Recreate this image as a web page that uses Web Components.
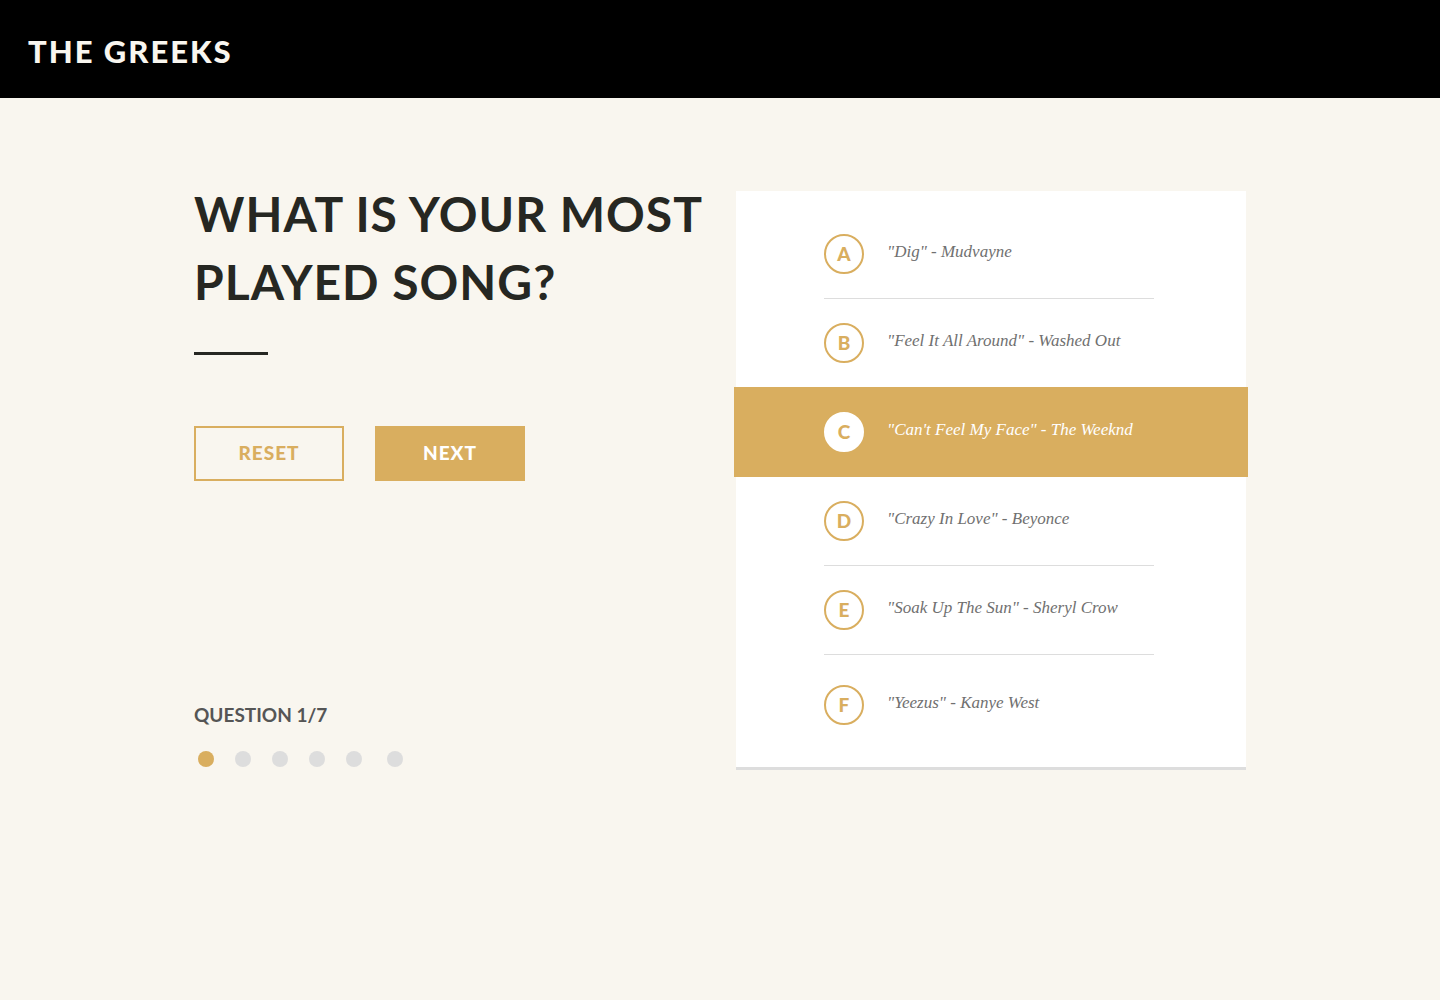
<!DOCTYPE html>
<html lang="en">
<head>
<meta charset="utf-8">
<title>The Greeks</title>
<style>
  :root {
    --gold: #d9ae5f;
    --ink: #262722;
    --paper: #f9f6ef;
    --line: #dddddd;
    --sans: Lato, "Open Sans", sans-serif;
    --serif: "Liberation Serif", serif;
  }
  body { margin: 0; background: var(--paper); color: var(--ink); font-family: var(--sans); }
</style>
</head>
<body>
<site-header>THE GREEKS</site-header>
<quiz-page>
  <quiz-question slot="question">What is your most played song?</quiz-question>
  <quiz-actions slot="actions"></quiz-actions>
  <quiz-progress slot="progress" dots="6" current="1">Question 1/7</quiz-progress>
  <quiz-answers slot="answers"></quiz-answers>
</quiz-page>

<script>
  const define = (name, markup, setup) => {
    const template = document.createElement('template');
    template.innerHTML = markup;
    customElements.define(name, class extends HTMLElement {
      constructor() {
        super();
        this.attachShadow({ mode: 'open' }).append(template.content.cloneNode(true));
      }
      connectedCallback() { if (setup) setup(this, this.shadowRoot); }
    });
  };

  define('site-header', `
    <style>
      :host { display: block; }
      header { display: flex; align-items: center; min-height: 98px; padding: 4px 28px 0; box-sizing: border-box; background: #000; }
      a { color: var(--paper); font-size: 31px; line-height: 40px; font-weight: 900; letter-spacing: 2px; text-decoration: none; }
    </style>
    <header><a href="#"><slot></slot></a></header>`);

  define('quiz-page', `
    <style>
      :host { display: block; }
      main { display: grid; grid-template-columns: minmax(0, 1fr) 510px; max-width: 1052px; margin: 0 auto; padding: 82px 24px; }
      .side { display: flex; flex-direction: column; justify-content: space-between; padding-bottom: 3px; }
      .card { margin-top: 11px; }
      @media (max-width: 1000px) {
        main { grid-template-columns: minmax(0, 1fr); gap: 40px; }
        .side { gap: 40px; }
      }
    </style>
    <main>
      <div class="side">
        <div><slot name="question"></slot><slot name="actions"></slot></div>
        <slot name="progress"></slot>
      </div>
      <div class="card"><slot name="answers"></slot></div>
    </main>`);

  define('quiz-question', `
    <style>
      :host { display: block; }
      h1 { margin: 0; font-size: 48px; line-height: 68px; font-weight: 700; letter-spacing: 1px; text-transform: uppercase; }
      hr { width: 74px; height: 3px; margin: 36px 0 0; border: 0; background: var(--ink); }
    </style>
    <h1><slot></slot></h1><hr>`);

  define('quiz-actions', `
    <style>
      :host { display: flex; flex-wrap: wrap; gap: 31px; margin-top: 71px; }
      button { width: 150px; height: 55px; padding: 0 0 2px; border: 2px solid var(--gold); background: transparent; color: var(--gold);
        font: 900 19px/24px var(--sans); letter-spacing: 1px; cursor: pointer; }
      .primary { background: var(--gold); color: #fff; }
    </style>
    <button type="button">RESET</button>
    <button type="button" class="primary">NEXT</button>`);

  define('quiz-progress', `
    <style>
      :host { display: block; }
      p { margin: 0 0 24px; color: #555; font-size: 19px; line-height: 24px; font-weight: 700; text-transform: uppercase; }
      ol { display: flex; gap: 21px; margin: 0; padding: 0 4px; list-style: none; }
      li { width: 16px; height: 16px; border-radius: 50%; background: var(--line); }
      li:last-child { margin-left: 4px; }
      li[aria-current] { background: var(--gold); }
    </style>
    <p><slot></slot></p><ol></ol>`, (host, root) => {
      const list = root.querySelector('ol');
      list.replaceChildren();
      for (let i = 1; i <= Number(host.getAttribute('dots')); i++) {
        const dot = document.createElement('li');
        if (i === Number(host.getAttribute('current'))) dot.setAttribute('aria-current', 'step');
        list.append(dot);
      }
    });

  const answers = [
    ['A', '"Dig" - Mudvayne'],
    ['B', '"Feel It All Around" - Washed Out'],
    ['C', '"Can\'t Feel My Face" - The Weeknd'],
    ['D', '"Crazy In Love" - Beyonce'],
    ['E', '"Soak Up The Sun" - Sheryl Crow'],
    ['F', '"Yeezus" - Kanye West']
  ];

  define('quiz-answers', `
    <style>
      :host { display: block; }
      fieldset { min-width: 0; margin: 0; padding: 19px 0 13px; border: 0; border-bottom: 3px solid var(--line); background: #fff; }
      .row { padding: 0 92px 0 88px; }
      label { display: grid; grid-template-columns: 40px 1fr; column-gap: 23px; align-items: center; height: 88px;
        border-bottom: 1px solid var(--line); cursor: pointer; }
      input { appearance: none; grid-area: 1 / 1; box-sizing: border-box; width: 40px; height: 40px; margin: 0;
        border: 2px solid var(--gold); border-radius: 50%; cursor: pointer; }
      .key { grid-area: 1 / 1; text-align: center; color: var(--gold); font-size: 19px; line-height: 24px; font-weight: 900; pointer-events: none; }
      .text { padding-bottom: 4px; color: #707070; font: italic 17px/24px var(--serif); }
      .row:has(+ .row input:checked) label { border-color: transparent; }
      .row:has(input:checked) { margin: -1px -2px 0; padding: 1px 94px 0 90px; background: var(--gold); }
      .row:has(input:checked) label { border-color: transparent; }
      .row:has(input:checked) .text { color: #fff; }
      input:checked { border-color: #fff; background: #fff; }
      .row:last-child label { height: 99px; border-bottom: 0; }
      @media (max-width: 560px) {
        .row, .row:has(input:checked) { padding-left: 24px; padding-right: 24px; }
      }
    </style>
    <fieldset aria-label="Answers"></fieldset>`, (host, root) => {
      root.querySelector('fieldset').innerHTML = answers.map(([key, text]) => `
        <div class="row"><label>
          <input type="radio" name="song" value="${key}"${key === 'C' ? ' checked' : ''}>
          <span class="key">${key}</span><span class="text">${text}</span>
        </label></div>`).join('');
    });
</script>
</body>
</html>
